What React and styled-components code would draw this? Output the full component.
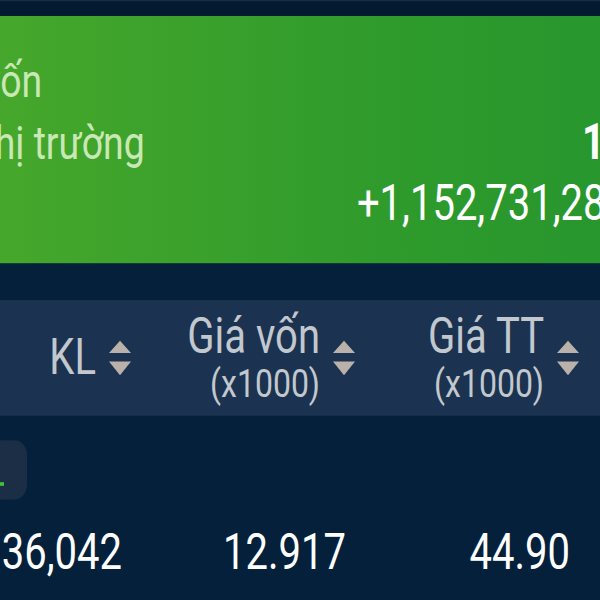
import React from "react";
import styled, { createGlobalStyle } from "styled-components";

const GlobalStyle = createGlobalStyle`
  html, body {
    margin: 0;
    padding: 0;
    background: #04203a;
    overflow: hidden;
  }
  body {
    font-family: Roboto, "Noto Sans", "Liberation Sans", sans-serif;
  }
`;

const SortIcon = () => (
  <svg width="24" height="34" viewBox="0 0 24 34">
    <path d="M12 3 L23 13 L1 13 Z" fill="#b9b1aa" />
    <path d="M1 20 L23 20 L12 31 Z" fill="#b9b1aa" />
  </svg>
);

const columns = [
  { title: "KL" },
  { title: "Giá vốn", unit: "(x1000)" },
  { title: "Giá TT", unit: "(x1000)" },
];

const values = ["136,042", "12.917", "44.90"];

const App = () => (
  <>
    <GlobalStyle />
    <Screen>
      <Page>
        <TopBar />
        <SummaryCard>
          <SummaryGrid>
            <Label>Giá trị vốn</Label>
            <Amount />
            <Label>Giá trị thị trường</Label>
            <Amount $bold>12</Amount>
            <span />
            <Amount>+1,152,731,280</Amount>
          </SummaryGrid>
        </SummaryCard>
        <Table>
          <HeaderRow>
            {columns.map((c) => (
              <HeaderCell key={c.title}>
                <HeaderText>
                  <HeaderTitle>{c.title}</HeaderTitle>
                  {c.unit && <HeaderUnit>{c.unit}</HeaderUnit>}
                </HeaderText>
                <SortIcon />
              </HeaderCell>
            ))}
          </HeaderRow>
          <StockRow>
            <ChipLine>
              <Chip>
                <ChipMark />
              </Chip>
            </ChipLine>
            <ValueLine>
              {values.map((v) => (
                <Value key={v}>{v}</Value>
              ))}
            </ValueLine>
          </StockRow>
        </Table>
      </Page>
    </Screen>
  </>
);

export default App;

/** styled components **/
const Screen = styled.div`
  width: 600px;
  height: 600px;
  overflow: hidden;
`;

// the screen is drawn a little taller than wide
const Page = styled.div`
  width: 600px;
  transform: scaleY(1.23);
  transform-origin: top left;
`;

const TopBar = styled.div`
  height: 13px;
  background: #031a30;
  border-top: 1px solid #1a2c3f;
  box-sizing: border-box;
`;

const SummaryCard = styled.div`
  height: 201px;
  margin-left: -125px;
  margin-right: -200px;
  padding-top: 28px;
  box-sizing: border-box;
  background: linear-gradient(90deg, #4dab2b 0%, #2f9b2c 55%, #20922e 100%);
`;

const SummaryGrid = styled.div`
  display: grid;
  grid-template-columns: auto 1fr;
  width: 753px;
`;

const Label = styled.div`
  font-size: 37.4px;
  line-height: 50px;
  color: #c9e8b6;
  white-space: nowrap;
`;

const Amount = styled.div`
  font-size: 40px;
  line-height: 50px;
  color: #ffffff;
  text-align: right;
  font-weight: ${(p) => (p.$bold ? 700 : 400)};
  white-space: nowrap;
`;

const Table = styled.div`
  margin-top: 30px;
  margin-left: -84px;
`;

const HeaderRow = styled.div`
  display: grid;
  grid-template-columns: repeat(3, 224px);
  height: 94px;
  background: #1b3350;
`;

const HeaderCell = styled.div`
  display: flex;
  align-items: center;
  justify-content: flex-end;
  gap: 12px;
  padding-right: 8px;
`;

const HeaderText = styled.div`
  display: flex;
  flex-direction: column;
  align-items: flex-end;
  color: #c2c8ce;
`;

const HeaderTitle = styled.span`
  font-size: 40px;
  line-height: 42px;
`;

const HeaderUnit = styled.span`
  font-size: 32px;
  line-height: 34px;
`;

const StockRow = styled.div`
  padding-top: 20px;
`;

const ChipLine = styled.div`
  height: 48px;
  margin-left: -40px;
`;

const Chip = styled.div`
  width: 151px;
  height: 48px;
  border-radius: 12px;
  background: #1b2e46;
  position: relative;
`;

const ChipMark = styled.div`
  position: absolute;
  left: 118px;
  top: 34px;
  width: 10px;
  height: 3px;
  background: #3fbf3a;
`;

const ValueLine = styled.div`
  display: grid;
  grid-template-columns: repeat(3, 224px);
  margin-top: 20px;
`;

const Value = styled.div`
  font-size: 40px;
  line-height: 48px;
  color: #ffffff;
  text-align: right;
  padding-right: 18px;
`;
